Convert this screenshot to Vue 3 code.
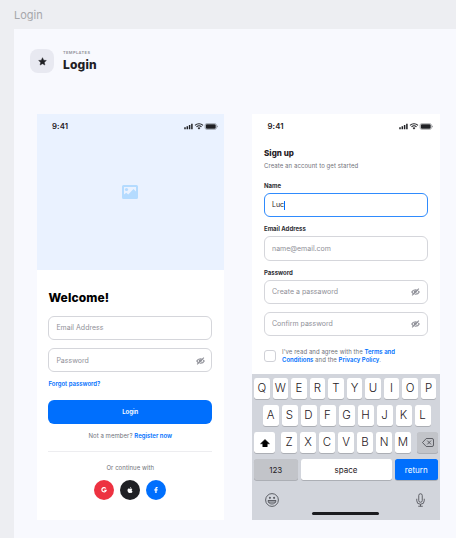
<script setup>
import { h } from 'vue'

const row1 = 'QWERTYUIOP'.split('')
const row2 = 'ASDFGHJKL'.split('')
const row3 = 'ZXCVBNM'.split('')

const StatusBar = () =>
  h('div', { class: 'status' }, [
    h('span', { class: 'clock' }, '9:41'),
    h('svg', { class: 'signals', viewBox: '0 0 68 14' }, [
      h('path', { d: 'M.5 8.500h3V12.500h-3zM5.100 6.500h3v6h-3zM9.700 4h3v8.500h-3zM14.300 1.500h3v11h-3z', fill: '#1f2024' }),
      h('path', {
        d: 'M22 4.800a11.500 11.500 0 0 1 16 0M25 7.900a7.200 7.200 0 0 1 10 0',
        fill: 'none', stroke: '#1f2024', 'stroke-width': 2.200
      }),
      h('path', { d: 'M27.200 10a4 4 0 0 1 5.600 0L30 13z', fill: '#1f2024' }),
      h('rect', { x: 42, y: 1, width: 23, height: 12, rx: 3.800, fill: 'none', stroke: '#1f2024', 'stroke-opacity': 0.500, 'stroke-width': 1.200 }),
      h('rect', { x: 43.600, y: 2.500, width: 19.800, height: 9, rx: 2.400, fill: '#1f2024' }),
      h('path', { d: 'M66.200 5v4c2-.7 2-3.300 0-4z', fill: '#1f2024', 'fill-opacity': 0.600 })
    ])
  ])

const EyeOff = () =>
  h('svg', { class: 'eye', viewBox: '0 0 18 16' }, [
    h('path', {
      d: 'M1.600 8C4.400 2 13.600 2 16.400 8C13.600 14 4.400 14 1.600 8z',
      fill: 'none', stroke: '#8f9098', 'stroke-width': 2.300
    }),
    h('circle', { cx: 9, cy: 8, r: 3.600, fill: '#8f9098' }),
    h('path', { d: 'M4.200 15L17.200 2.600', stroke: '#fff', 'stroke-width': 1.500 }),
    h('path', { d: 'M2.200 14.600L15.800 1.200', stroke: '#8f9098', 'stroke-width': 2.100 })
  ])
</script>

<template>
  <div class="canvas">
    <div class="frame-label">Login</div>
    <main class="frame">
      <header class="head">
        <div class="badge">
          <svg viewBox="0 0 20 20"><path d="M10 1.500l2.500 5.600 6.100.7-4.500 4.100 1.200 6L10 14.900l-5.300 3 1.200-6L1.400 7.800l6.100-.7z" fill="#1f2024" stroke="#1f2024" stroke-linejoin="round" /></svg>
        </div>
        <div>
          <div class="overline">TEMPLATES</div>
          <h1>Login</h1>
        </div>
      </header>

      <div class="phones">
        <section class="phone">
          <div class="hero">
            <StatusBar />
            <svg class="picture" viewBox="0 0 32 28">
              <path fill-rule="evenodd" d="M3 0h26a3 3 0 0 1 3 3v22a3 3 0 0 1-3 3H3a3 3 0 0 1-3-3V3a3 3 0 0 1 3-3zM4 4v15l4.500-3.500 4 3.500L23 8l5 5V4z" fill="#b4dbff" />
              <circle cx="9" cy="9" r="3.200" fill="#b4dbff" />
            </svg>
          </div>
          <div class="login">
            <h2>Welcome!</h2>
            <div class="field">Email Address</div>
            <div class="field second">Password<EyeOff /></div>
            <a class="forgot">Forgot password?</a>
            <button class="primary">Login</button>
            <p class="member">Not a member? <b>Register now</b></p>
            <hr />
            <p class="with">Or continue with</p>
            <div class="social">
              <span class="google"><svg viewBox="0 0 12 12"><path d="M9.700 3A4.300 4.300 0 1 0 10.300 6.500H6.200" fill="none" stroke="#fff" stroke-width="2.400" /></svg></span>
              <span class="apple"><svg viewBox="0 0 12 12"><path d="M8.300.2C8.400 1.800 7.200 3 5.900 3 5.700 1.600 6.900.3 8.300.2zM6.100 3.700C7 3.700 7.700 3.100 8.700 3.200c.8 0 1.600.5 2 1.100-1.900 1.200-1.600 3.700.4 4.500-.5 1.400-1.500 3-2.600 3-.8 0-1.300-.5-2.200-.5s-1.400.5-2.200.5C2.600 11.700 1 8.900 1 6.700c0-2.300 1.500-3.500 2.900-3.500.9 0 1.600.5 2.200.5z" fill="#fff" /></svg></span>
              <span class="facebook"><svg viewBox="0 0 12 12"><path d="M4.700 12V6.900H2.900V4.700h1.800V3.200C4.700 1.200 5.800.1 7.600.1c.8 0 1.500.1 1.500.1v1.900h-.9c-.9 0-1.200.6-1.200 1.200v1.400h2l-.3 2.200H7V12z" fill="#fff" stroke="#fff" stroke-width=".4" /></svg></span>
            </div>
          </div>
        </section>

        <section class="phone">
          <StatusBar />
          <div class="signup">
            <h3>Sign up</h3>
            <p class="sub">Create an account to get started</p>
            <label class="l-name">Name</label>
            <div class="field focus">Luc<i class="caret"></i></div>
            <label>Email Address</label>
            <div class="field">name@email.com</div>
            <label>Password</label>
            <div class="field">Create a passaword<EyeOff /></div>
            <div class="field second">Confirm password<EyeOff /></div>
            <div class="agree">
              <span class="box"></span>
              <div>
                <p>I've read and agree with the <b>Terms and</b></p>
                <p><b>Conditions</b> and the <b>Privacy Policy</b>.</p>
              </div>
            </div>
          </div>
          <div class="keyboard">
            <div class="keys r1"><span v-for="k in row1" :key="k" class="key">{{ k }}</span></div>
            <div class="keys r2"><span v-for="k in row2" :key="k" class="key">{{ k }}</span></div>
            <div class="keys r3">
              <span class="key shift"><svg viewBox="0 0 20 17"><path d="M10 .8l9 8.700h-4.500V15a1 1 0 0 1-1 1h-7a1 1 0 0 1-1-1V9.500H1z" fill="#000" stroke="#000" stroke-linejoin="round" /></svg></span>
              <div class="letters"><span v-for="k in row3" :key="k" class="key">{{ k }}</span></div>
              <span class="key gray del"><svg viewBox="0 0 24 18" fill="none" stroke="#3c3e44" stroke-width="1.500"><path d="M8.500 1H20a3 3 0 0 1 3 3v10a3 3 0 0 1-3 3H8.500L1 9zM10.500 5.200l7.500 7.600M18 5.200l-7.500 7.600" stroke-linejoin="round" /></svg></span>
            </div>
            <div class="keys r4">
              <span class="key gray word">123</span>
              <span class="key word space">space</span>
              <span class="key word return">return</span>
            </div>
            <div class="tools">
              <svg class="emoji" viewBox="0 0 27 27" fill="none" stroke="#4b4d54" stroke-width="1.700"><circle cx="13.500" cy="13.500" r="12.300" /><path d="M5.800 14.500h15.400c-.4 9-15 9-15.400 0zM7 17.500h13" /><ellipse cx="9.500" cy="9.300" rx="1" ry="1.500" fill="#4b4d54" /><ellipse cx="17.500" cy="9.300" rx="1" ry="1.500" fill="#4b4d54" /></svg>
              <svg class="mic" viewBox="0 0 18 27" fill="none" stroke="#4b4d54" stroke-width="1.700"><rect x="5.500" y="1" width="7" height="17" rx="3.500" /><path d="M1.500 11v4a7.500 7 0 0 0 15 0v-4M9 22v4M4.500 26h9" /></svg>
            </div>
            <div class="home"></div>
          </div>
        </section>
      </div>
    </main>
  </div>
</template>

<style>
body { margin: 0; overflow: hidden; }
.status { display: flex; justify-content: space-between; align-items: center; height: 22px; padding: 2px 6.500px 0 15.500px; box-sizing: border-box; width: 100%; }
.clock { font-size: 7.800px; font-weight: 600; color: #1f2024; letter-spacing: 0.100px; line-height: 10px; }
.signals { width: 34px; height: 7px; display: block; }
.eye { width: 9px; height: 8px; display: block; }
</style>

<style scoped>
* { box-sizing: border-box; margin: 0; }
.canvas { width: 456px; height: 538px; background: #edeef2; padding-left: 14px; overflow: hidden; font-family: Inter, "Liberation Sans", sans-serif; color: #1f2024; }
.frame-label { height: 29px; padding-top: 8px; font-size: 11px; line-height: 15px; color: #a6a7ab; }
.frame { background: #f8f9fe; height: 509px; padding: 20px 0 0 16px; }
.head { display: flex; gap: 9px; height: 65px; }
.badge { width: 24px; height: 24px; border-radius: 8px; background: #e8e9f1; display: flex; align-items: center; justify-content: center; }
.badge svg { width: 9px; height: 9px; }
.overline { font-size: 4px; line-height: 5px; padding-top: 1px; font-weight: 600; letter-spacing: 0.400px; color: #8f9098; }
h1 { font-size: 12px; line-height: 15px; padding-top: 1.500px; font-weight: 800; letter-spacing: 0.200px; }
.phones { display: flex; gap: 28px; padding-left: 6.500px; }
.phone { width: 187.500px; height: 406px; background: #fff; display: flex; flex-direction: column; flex: none; }
.hero { height: 156px; background: #eaf2ff; display: flex; flex-direction: column; align-items: center; }
.picture { width: 16px; height: 14px; margin-top: 49px; }
.login { padding: 20px 11.900px 0; display: flex; flex-direction: column; }
h2 { color: #000; font-size: 12px; line-height: 15px; font-weight: 800; letter-spacing: 0.120px; margin-bottom: 11px; margin-top: -0.400px; }
.field { height: 24.400px; border: 1px solid #d5d6db; border-radius: 6px; padding: 0.800px 7px 0; display: flex; align-items: center; font-size: 7px; line-height: 10px; color: #8f9098; }
.field .eye { margin-left: auto; margin-right: -0.500px; }
.second { margin-top: 8px; }
.forgot { font-size: 6px; line-height: 8px; font-weight: 600; color: #006ffd; margin-top: 8px; }
.primary { height: 24px; border: 0; border-radius: 6px; background: #006ffd; color: #fff; font: 600 6px/8px Inter, sans-serif; margin-top: 11.600px; padding: 0; }
.member, .with { text-align: center; font-size: 6px; line-height: 8px; letter-spacing: 0.060px; color: #71727a; }
.member { margin-top: 8px; }
b { font-weight: 600; color: #006ffd; letter-spacing: 0; }
hr { border: 0; width: 100%; height: 1px; background: #ededf0; margin: 11px 0 12px; }
.social { display: flex; justify-content: center; gap: 6px; margin-top: 8px; }
.social span { width: 20px; height: 20px; border-radius: 50%; display: flex; align-items: center; justify-content: center; }
.social svg { width: 6px; height: 6px; }
.google { background: #ed3241; }
.apple { background: #1f2024; }
.facebook { background: #006ffd; }
.signup { padding: 12px 12px 0; height: 237.500px; }
h3 { font-size: 8px; line-height: 10px; font-weight: 800; letter-spacing: 0.040px; }
.sub { font-size: 6px; line-height: 8px; letter-spacing: 0.080px; color: #71727a; margin-top: 3.500px; }
label { display: block; font-size: 6px; line-height: 8px; font-weight: 700; color: #2f3036; margin: 8.100px 0 3.100px; }
.l-name { margin-top: 12.400px; }
.signup .field { height: 24.200px; }
.signup .focus { border-color: #2f8bfd; color: #1f2024; }
.caret { width: 1px; height: 9px; background: #006ffd; }
.agree { display: flex; gap: 6px; align-items: center; margin-top: 12px; }
.box { width: 12px; height: 12px; border: 1px solid #d0d1d7; border-radius: 3px; flex: none; }
.agree p { font-size: 6px; line-height: 8px; letter-spacing: 0.060px; color: #71727a; white-space: nowrap; }
.keyboard { height: 146.500px; background: #d2d5dc; padding-top: 4px; }
.keys { display: flex; gap: 3px; height: 21px; margin-bottom: 6.300px; }
.key { background: #fff; border-radius: 2.500px; box-shadow: 0 0.700px 0 #a0a2a8; flex: 1; display: flex; align-items: center; justify-content: center; font-size: 11.500px; line-height: 15px; color: #1f2024; font-weight: 300; padding-top: 0.600px; }
.r1 { padding: 0 3px 0 2px; }
.r2 { padding: 0 9px 0 10.500px; }
.r3, .r4 { padding: 0 1.500px 0 2px; }
.r3 { justify-content: space-between; }
.letters { display: flex; gap: 3px; width: 130px; }
.shift, .del { flex: none; width: 21px; }
.shift svg { width: 10px; height: 8.500px; }
.del svg { width: 12px; height: 9px; }
.gray { background: #c2c4c9; }
.word { font-size: 8px; font-weight: 400; flex: none; width: 43.500px; }
.space { flex: 1; width: auto; }
.return { background: #006ffd; color: #fff; }
.tools { display: flex; justify-content: space-between; align-items: center; padding: 0 15px 0 12.500px; height: 14px; margin-top: 13px; }
.emoji { width: 14px; height: 14px; }
.mic { width: 9px; height: 14px; }
.home { width: 67px; height: 3px; border-radius: 2px; background: #1b1c20; margin: 4.800px auto 0; }
</style>
